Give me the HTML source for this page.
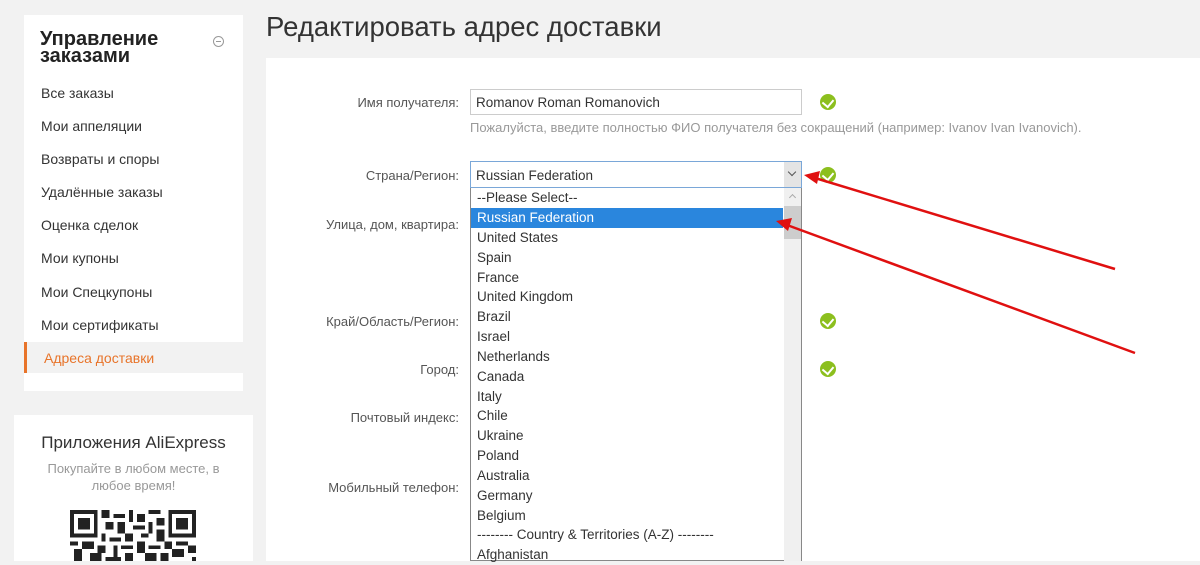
<!DOCTYPE html>
<html><head><meta charset="utf-8"><style>
*{margin:0;padding:0;box-sizing:border-box}
body{width:1200px;height:561px;overflow:hidden;background:#f2f2f2;font-family:"Liberation Sans","DejaVu Sans",sans-serif;position:relative;color:#333}
.abs{position:absolute}
.card{background:#fff}
.nav{left:41px;font-size:14px;color:#333}
.lbl{font-size:13px;color:#555;text-align:right;width:200px;left:259px}
.chk{width:16px;height:16px;border-radius:50%;background:#8cbf1e;left:820px}
.chk::after{content:"";position:absolute;left:4px;top:3px;width:6px;height:8px;border:solid #fff;border-width:0 2px 2px 0;transform:rotate(40deg)}
.it{position:absolute;left:6px;font-size:13.5px;color:#333;height:20px;line-height:20px}
</style></head><body>
<div class="abs card" style="left:24px;top:15px;width:219px;height:376px"></div>
<div class="abs" style="left:40px;top:31px;font-size:20px;font-weight:bold;line-height:17px;color:#222">Управление<br>заказами</div>
<div class="abs" style="left:213px;top:36px;width:11px;height:11px;border:1px solid #999;border-radius:50%"></div>
<div class="abs" style="left:216px;top:41px;width:5px;height:1px;background:#999"></div>
<div class="abs nav" style="top:85px">Все заказы</div>
<div class="abs nav" style="top:118px">Мои аппеляции</div>
<div class="abs nav" style="top:151px">Возвраты и споры</div>
<div class="abs nav" style="top:184px">Удалённые заказы</div>
<div class="abs nav" style="top:217px">Оценка сделок</div>
<div class="abs nav" style="top:250px">Мои купоны</div>
<div class="abs nav" style="top:284px">Мои Спецкупоны</div>
<div class="abs nav" style="top:317px">Мои сертификаты</div>
<div class="abs" style="left:24px;top:342px;width:219px;height:31px;background:#f2f2f2;border-left:3px solid #e8742a"></div>
<div class="abs nav" style="top:350px;left:44px;color:#e8742a">Адреса доставки</div>
<div class="abs card" style="left:14px;top:415px;width:239px;height:146px"></div>
<div class="abs" style="left:14px;width:239px;text-align:center;top:433px;font-size:17px;color:#333">Приложения AliExpress</div>
<div class="abs" style="left:14px;width:239px;text-align:center;top:460px;font-size:13px;color:#999;line-height:17px">Покупайте в любом месте, в<br>любое время!</div>
<svg class="abs" style="left:69px;top:510px" width="128" height="51" viewBox="0 0 32 13" shape-rendering="crispEdges">
<g fill="#222">
<rect x="0" y="0" width="7" height="7"/><rect x="25" y="0" width="7" height="7"/>
<rect x="1" y="1" width="5" height="5" fill="#fff"/><rect x="26" y="1" width="5" height="5" fill="#fff"/>
<rect x="2" y="2" width="3" height="3"/><rect x="27" y="2" width="3" height="3"/>
<path d="M8 0h2v2h-2zM11 1h3v1h-3zM15 0h1v3h-1zM17 1h2v2h-2zM20 0h3v1h-3zM22 2h2v2h-2zM9 3h2v2h-2zM12 3h2v3h-2zM16 4h3v1h-3zM20 3h1v3h-1zM8 6h1v2h-1zM10 7h3v1h-3zM14 6h2v2h-2zM18 6h2v1h-2zM22 5h2v3h-2zM0 8h2v1h-2zM3 8h3v2h-3zM7 9h2v2h-2zM11 9h1v3h-1zM13 9h3v1h-3zM17 8h2v3h-2zM20 9h3v1h-3zM24 8h2v2h-2zM27 8h3v1h-3zM30 9h2v2h-2zM1 10h2v3h-2zM5 11h3v2h-3zM9 12h4v1h-4zM14 11h2v2h-2zM19 11h3v2h-3zM23 11h2v2h-2zM26 10h3v2h-3zM31 12h1v1h-1z"/>
</g></svg>

<div class="abs" style="left:266px;top:11px;font-size:27.5px;color:#333">Редактировать адрес доставки</div>
<div class="abs card" style="left:266px;top:58px;width:934px;height:503px"></div>

<div class="abs lbl" style="top:95px">Имя получателя:</div>
<div class="abs" style="left:470px;top:89px;width:332px;height:26px;border:1px solid #ccc;font-size:13.5px;padding:5px 5px;color:#333">Romanov Roman Romanovich</div>
<div class="abs chk" style="top:94px"></div>
<div class="abs" style="left:470px;top:120px;font-size:13px;color:#999">Пожалуйста, введите полностью ФИО получателя без сокращений (например: Ivanov Ivan Ivanovich).</div>

<div class="abs lbl" style="top:168px">Страна/Регион:</div>
<div class="abs" style="left:470px;top:161px;width:332px;height:27px;border:1px solid #7aa7d8;font-size:13.5px;padding:6px 5px;color:#333">Russian Federation</div>
<div class="abs" style="left:784px;top:162px;width:17px;height:25px;background:#e4e4e4"></div>
<div class="abs" style="left:789px;top:169px;width:6px;height:6px;border:solid #555;border-width:0 1.5px 1.5px 0;transform:rotate(45deg)"></div>
<div class="abs chk" style="top:167px"></div>

<div class="abs lbl" style="top:217px">Улица, дом, квартира:</div>
<div class="abs lbl" style="top:314px">Край/Область/Регион:</div>
<div class="abs chk" style="top:313px"></div>
<div class="abs lbl" style="top:362px">Город:</div>
<div class="abs chk" style="top:361px"></div>
<div class="abs lbl" style="top:410px">Почтовый индекс:</div>
<div class="abs lbl" style="top:480px">Мобильный телефон:</div>

<div class="abs" style="left:470px;top:188px;width:332px;height:373px;background:#fff;border:1px solid #888;border-top:none">
<div class="abs" style="left:313px;top:0;width:17px;height:373px;background:#f0f0f0"></div>
<div class="abs" style="left:313px;top:18px;width:17px;height:33px;background:#cdcdcd"></div>
<div class="abs" style="left:319px;top:7px;width:5px;height:5px;border:solid #aaa;border-width:1.5px 0 0 1.5px;transform:rotate(45deg)"></div>
<div class="abs" style="left:0;top:20px;width:312px;height:20px;background:#2a86dd"></div>
<div class="it" style="top:0">--Please Select--</div>
<div class="it" style="top:20px;color:#fff">Russian Federation</div>
<div class="it" style="top:40px">United States</div>
<div class="it" style="top:60px">Spain</div>
<div class="it" style="top:80px">France</div>
<div class="it" style="top:99px">United Kingdom</div>
<div class="it" style="top:119px">Brazil</div>
<div class="it" style="top:139px">Israel</div>
<div class="it" style="top:159px">Netherlands</div>
<div class="it" style="top:179px">Canada</div>
<div class="it" style="top:199px">Italy</div>
<div class="it" style="top:218px">Chile</div>
<div class="it" style="top:238px">Ukraine</div>
<div class="it" style="top:258px">Poland</div>
<div class="it" style="top:278px">Australia</div>
<div class="it" style="top:298px">Germany</div>
<div class="it" style="top:318px">Belgium</div>
<div class="it" style="top:337px">-------- Country &amp; Territories (A-Z) --------</div>
<div class="it" style="top:357px">Afghanistan</div>
</div>

<svg class="abs" style="left:0;top:0" width="1200" height="561">
<g stroke="#e01010" stroke-width="2.5" fill="#e01010">
<line x1="1115" y1="269" x2="815" y2="178"/>
<polygon points="804,175 820,171 817,184" stroke="none"/>
<line x1="1135" y1="353" x2="787" y2="225"/>
<polygon points="776,221 792,218 788,231" stroke="none"/>
</g></svg>
</body></html>
